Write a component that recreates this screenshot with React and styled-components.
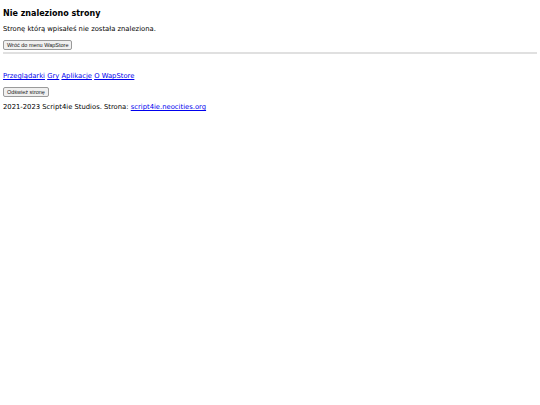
import styled, { createGlobalStyle } from "styled-components";

const GlobalStyle = createGlobalStyle`
  body {
    margin: 3px;
    background: #fff;
    color: #000;
    font-family: "DejaVu Sans", Verdana, sans-serif;
    font-size: 6.8px;
    line-height: 9px;
  }
`;

const Title = styled.h1`
  font-size: 8px;
  line-height: 10px;
  font-weight: bold;
  margin: 6px 0 6px;
`;

const Text = styled.p`
  margin: 0;
`;

const Button = styled.button`
  display: block;
  margin-top: ${(p) => p.$gap}px;
  font-family: "Liberation Sans", Arial, sans-serif;
  font-size: 5.5px;
  padding: 1px 3px;
  background: #f0f0f0;
  border: 1px solid #9a9a9a;
  border-radius: 2px;
  color: #222;
  height: 10px;
  line-height: 6px;
`;

const Rule = styled.hr`
  margin: 2px 0 0;
  border: none;
  height: 2px;
  background: #e0e0e0;
`;

const Nav = styled.nav`
  margin-top: 18px;
`;

const Link = styled.a`
  color: #0000ee;
  text-decoration: underline;
`;

const Footer = styled.p`
  margin: 6px 0 0;
`;

export default function App() {
  return (
    <>
      <GlobalStyle />
      <Title>Nie znaleziono strony</Title>
      <Text>Stronę którą wpisałeś nie została znaleziona.</Text>
      <Button $gap={6}>Wróć do menu WapStore</Button>
      <Rule />
      <Nav>
        <Link href="#">Przeglądarki</Link> <Link href="#">Gry</Link>{" "}
        <Link href="#">Aplikacje</Link> <Link href="#">O WapStore</Link>
      </Nav>
      <Button $gap={6}>Odśwież stronę</Button>
      <Footer>
        2021-2023 Script4ie Studios. Strona:{" "}
        <Link href="#">script4ie.neocities.org</Link>
      </Footer>
    </>
  );
}
